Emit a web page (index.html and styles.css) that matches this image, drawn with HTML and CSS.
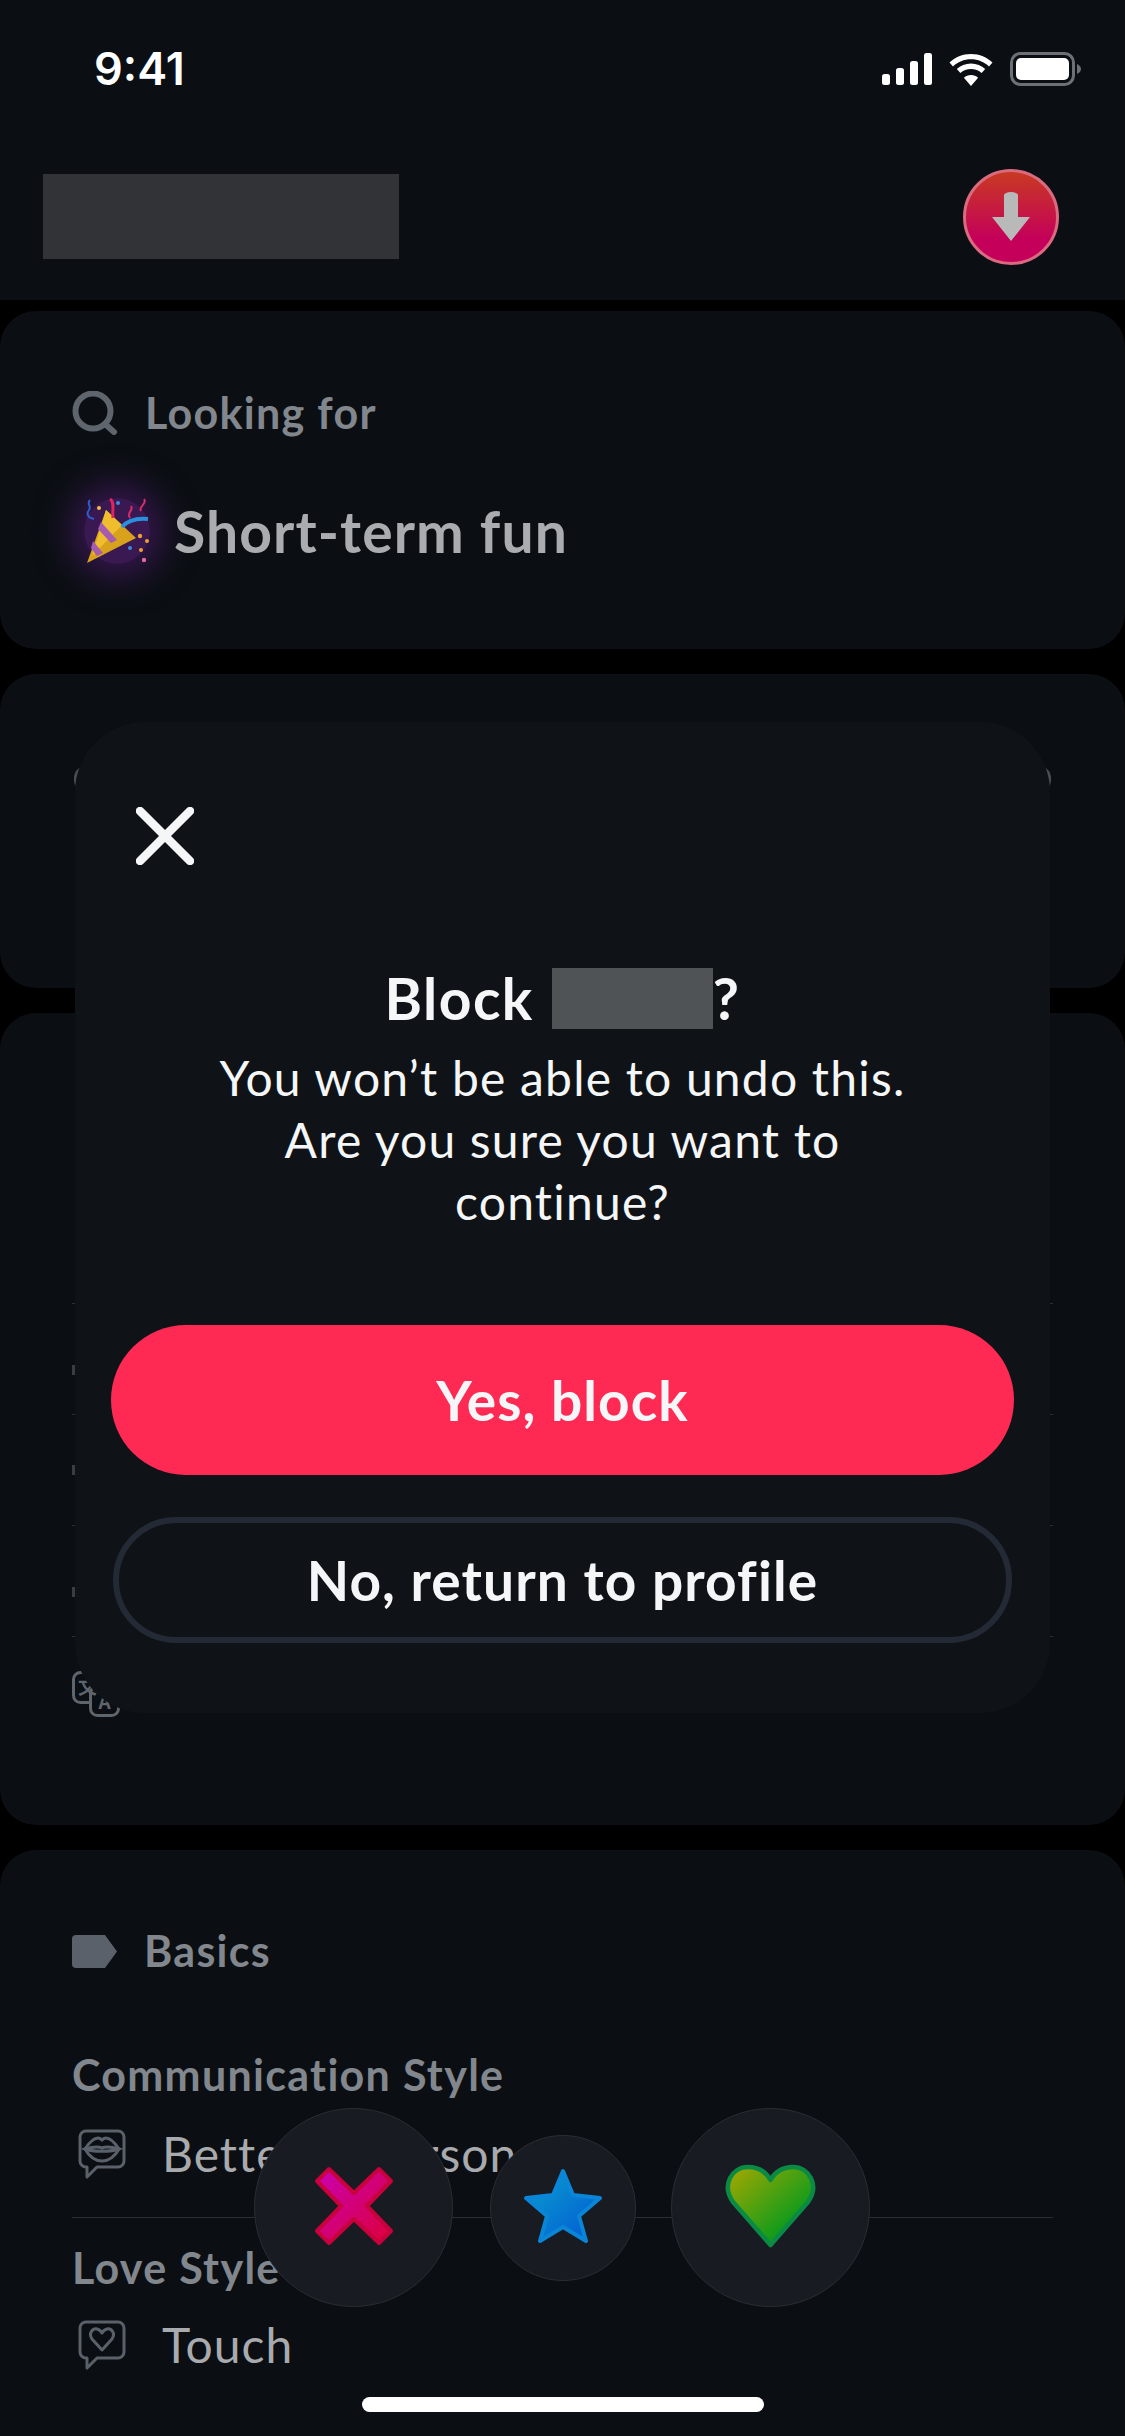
FILE: index.html
```html
<!DOCTYPE html>
<html lang="en">
<head>
<meta charset="UTF-8" />
<meta name="viewport" content="width=device-width, initial-scale=1" />
<title>Block profile</title>
<link rel="stylesheet" href="styles.css">
</head>
<body>
<div id="app">
  <header class="top-bar">
    <div class="status-bar">
      <span class="clock">9:41</span>
      <div class="status-icons">
        <svg class="signal" width="50" height="32" viewBox="0 0 50 32"><rect x="0" y="21" width="8" height="11" rx="2.5"/><rect x="14" y="15" width="8" height="17" rx="2.5"/><rect x="28" y="8" width="8" height="24" rx="2.5"/><rect x="42" y="0" width="8" height="32" rx="2.5"/></svg>
        <svg class="wifi" width="46" height="33" viewBox="0 0 46 33"><path d="M23 5C14.500 5 7 8.300 1.500 13.500L5 17.500C9.700 13 16 10.300 23 10.300S36.300 13 41 17.500L44.500 13.500C39 8.300 31.500 5 23 5Z" transform="translate(0 -4)"/><path d="M23 13.500C17.500 13.500 12.500 15.600 8.800 19L12.400 23C15.200 20.400 18.900 18.900 23 18.900S30.800 20.400 33.600 23L37.200 19C33.500 15.600 28.500 13.500 23 13.500Z" transform="translate(0 -3)"/><path d="M23 22C20.300 22 17.800 23 15.900 24.800L23 33L30.100 24.800C28.200 23 25.700 22 23 22Z"/></svg>
        <svg class="battery" width="71" height="34" viewBox="0 0 71 34"><rect x="1.500" y="1.500" width="62" height="31" rx="9" fill="none" stroke="#6d7074" stroke-width="3"/><rect x="6" y="6" width="53" height="22" rx="5" fill="#fff"/><path d="M67 12c2.500 1 4 3 4 5s-1.500 4-4 5z" fill="#6d7074"/></svg>
      </div>
    </div>
    <div class="nav-row">
      <div class="name-block"></div>
      <button class="rewind-btn">
        <svg width="40" height="50" viewBox="0 0 40 50"><path d="M13 3a7 3 0 0 1 14 0V25H39L20 49 1 25H13Z" fill="#b9b9b9"/></svg>
      </button>
    </div>
  </header>

  <main class="cards">
    <section class="card looking-card">
      <div class="section-head">
        <svg class="head-icon" width="46" height="44" viewBox="0 0 46 44"><circle cx="21" cy="20" r="17.500" fill="none" stroke="#5f656c" stroke-width="6"/><path d="M33 33L42 41" stroke="#5f656c" stroke-width="6" stroke-linecap="round"/></svg>
        <span>Looking for</span>
      </div>
      <div class="looking-value">
        <span class="emoji-glow">
          <svg width="66" height="66" viewBox="0 0 66 66">
            <path d="M22 12L52 40 3 65Z" fill="#d9a21c"/>
            <path d="M22 12L38 27 8 58Z" fill="#efbe2e"/>
            <path d="M17 24L33 42 27 45 14 31Z" fill="#a45bb0"/>
            <path d="M9 43L19 55 13 58 7 50Z" fill="#a45bb0"/>
            <path d="M38 29C44 22 52 20 64 21" fill="none" stroke="#2a8fdc" stroke-width="4"/>
            <path d="M26 1C31 4 28 12 29 20" fill="none" stroke="#e0245e" stroke-width="3"/>
            <path d="M46 20C42 14 50 13 47 8M60 1C64 6 54 8 57 13" fill="none" stroke="#d62d6a" stroke-width="2"/>
            <path d="M6 2C2 6 8 8 5 12S4 20 10 21" fill="none" stroke="#2d5fd0" stroke-width="2"/>
            <circle cx="15" cy="10" r="2" fill="#f0c040"/><circle cx="34" cy="5" r="2" fill="#3d8be0"/>
            <circle cx="56" cy="38" r="2.200" fill="#f0a030"/><circle cx="63" cy="43" r="2" fill="#f0a030"/>
            <circle cx="46" cy="50" r="2" fill="#3d8be0"/><circle cx="57" cy="52" r="2" fill="#f0a030"/>
            <circle cx="60" cy="62" r="2.200" fill="#e06a9a"/>
          </svg>
        </span>
        <span>Short-term fun</span>
      </div>
    </section>

    <section class="card bio-card">
      <div class="photo-edge"></div>
    </section>

    <section class="card details-card">
      <div class="detail-row top-row"></div>
      <div class="detail-row"><span class="row-edge low"></span></div>
      <div class="detail-row"><span class="row-edge"></span></div>
      <div class="detail-row"><span class="row-edge low"></span></div>
      <div class="language-row">
        <svg width="48" height="46" viewBox="0 0 48 46">
          <rect x="1.500" y="1.500" width="28" height="30" rx="7" fill="none" stroke="#5f656c" stroke-width="3"/>
          <rect x="18.500" y="15.500" width="28" height="29" rx="7" fill="#0b0f13" stroke="#5f656c" stroke-width="3"/>
          <text x="15.500" y="23" class="lang-glyph">文</text>
          <text x="32.500" y="38" class="lang-glyph">A</text>
        </svg>
        <span class="lang-dots"><i></i><i></i><i></i><i></i></span>
      </div>
    </section>

    <section class="card basics-card">
      <div class="section-head">
        <svg class="head-icon" width="45" height="33" viewBox="0 0 45 33"><path d="M4 0H33L45 16.500 33 33H4A4 4 0 0 1 0 29V4A4 4 0 0 1 4 0Z" fill="#5b616a"/></svg>
        <span>Basics</span>
      </div>
      <div class="basic-item first">
        <div class="basic-label">Communication Style</div>
        <div class="basic-value">
          <svg width="48" height="50" viewBox="0 0 48 50" fill="none" stroke="#5b616a" stroke-width="3">
            <path d="M8 2H40A6 6 0 0 1 46 8V32A6 6 0 0 1 40 38H19L9 48V38H8A6 6 0 0 1 2 32V8A6 6 0 0 1 8 2Z" stroke-linejoin="round"/>
            <path d="M7 20C11 14 16 9 20 9 22 9 23 10 24 11 25 10 26 9 28 9 32 9 37 14 41 20 37 27 31 32 24 32S11 27 7 20Z"/>
            <path d="M7 20C14 18 19 17 24 19 29 17 34 18 41 20 34 23 14 23 7 20Z"/>
          </svg>
          <span>Better in person</span>
        </div>
      </div>
      <div class="basic-item last">
        <div class="basic-label">Love Style</div>
        <div class="basic-value">
          <svg width="48" height="50" viewBox="0 0 48 50" fill="none" stroke="#5b616a" stroke-width="3">
            <path d="M8 2H40A6 6 0 0 1 46 8V32A6 6 0 0 1 40 38H19L9 48V38H8A6 6 0 0 1 2 32V8A6 6 0 0 1 8 2Z" stroke-linejoin="round"/>
            <path d="M24 30L14 19C10 13 15 8 19 9 21 9.500 23 11 24 13 25 11 27 9.500 29 9 33 8 38 13 34 19Z" stroke-linejoin="round"/>
          </svg>
          <span>Touch</span>
        </div>
      </div>
    </section>
  </main>

  <div class="action-buttons">
    <button class="action-btn big">
      <svg width="80" height="80" viewBox="0 0 80 80">
        <defs><linearGradient id="nope" x1="0" y1="0" x2="1" y2="1"><stop offset="0" stop-color="#c900b4"/><stop offset="1" stop-color="#dc0038"/></linearGradient></defs>
        <path d="M15 3L40 27 65 3 77 15 53 40 77 65 65 77 40 53 15 77 3 65 27 40 3 15Z" fill="url(#nope)" stroke="#c8003c" stroke-width="4" stroke-linejoin="round"/>
      </svg>
    </button>
    <button class="action-btn small">
      <svg width="80" height="76" viewBox="0 0 80 76">
        <defs><linearGradient id="superlike" x1="0" y1="0" x2="1" y2="1"><stop offset="0" stop-color="#0ca0cc"/><stop offset="1" stop-color="#0058d4"/></linearGradient></defs>
        <path d="M40 3L50 27 77 30 56 48 63 73 40 59 17 73 24 48 3 30 30 27Z" fill="url(#superlike)" stroke="#0a86d8" stroke-width="4" stroke-linejoin="round"/>
      </svg>
    </button>
    <button class="action-btn big">
      <svg width="93" height="84" viewBox="0 0 93 84">
        <defs><linearGradient id="like" x1="0" y1="0" x2="1" y2="1"><stop offset="0" stop-color="#a8a800"/><stop offset="0.8" stop-color="#009a1e"/></linearGradient></defs>
        <path d="M46.500 81L9 38C-3 21 8 3 24 3 34 3 42 8 46.500 16 51 8 59 3 69 3 85 3 96 21 84 38Z" fill="url(#like)" stroke="#0a8a44" stroke-width="4.500" stroke-linejoin="round"/>
      </svg>
    </button>
  </div>
  <div class="home-indicator"></div>

  <div class="block-modal">
    <button class="close-btn">
      <svg width="58" height="58" viewBox="0 0 58 58"><path d="M4 4L54 54M54 4L4 54" stroke="#f5f6f7" stroke-width="8.500" stroke-linecap="round"/></svg>
    </button>
    <h2 class="modal-title">Block <span class="name-mask"></span>?</h2>
    <p class="modal-text">You won’t be able to undo this.<br>Are you sure you want to<br>continue?</p>
    <button class="modal-btn primary">Yes, block</button>
    <button class="modal-btn secondary">No, return to profile</button>
  </div>
</div>
</body>
</html>
```

FILE: styles.css
```css
* {
  box-sizing: border-box;
}

body {
  margin: 0;
  background: #000;
  font-family: 'Lato', 'Open Sans', sans-serif;
  color: #f5f6f7;
}

button {
  font-family: inherit;
  padding: 0;
  border: none;
  background: none;
  display: flex;
  align-items: center;
  justify-content: center;
}

#app {
  position: relative;
  width: 1125px;
  height: 2436px;
  overflow: hidden;
}

/* Top bar */
.top-bar {
  height: 300px;
  background: #0b0f13;
  padding: 0 44px 0 43px;
}

.status-bar {
  height: 138px;
  padding: 52px 0 0 51px;
  display: flex;
  justify-content: space-between;
  align-items: flex-start;
}

.clock {
  font-family: 'Inter', sans-serif;
  font-size: 45px;
  line-height: 34px;
  font-weight: 600;
  color: #fff;
}

.status-icons {
  display: flex;
  gap: 16px;
  align-items: center;
}

.status-icons svg {
  display: block;
  fill: #fff;
}

.nav-row {
  display: flex;
  justify-content: space-between;
  align-items: center;
  padding-right: 22px;
  height: 96px;
  margin-top: 31px;
}

.name-block {
  width: 356px;
  height: 85px;
  margin-top: -2px;
  background: #323336;
}

.rewind-btn {
  width: 96px;
  height: 96px;
  border-radius: 50%;
  border: 3px solid #d96a80;
  background: linear-gradient(180deg, #c83a22 0%, #c4005a 75%);
}

/* Cards */
.cards {
  display: flex;
  flex-direction: column;
  gap: 25px;
  margin-top: 11px;
}

.card {
  background: #0b0f13;
  border-radius: 36px;
  padding: 0 72px;
}

.section-head {
  display: flex;
  align-items: center;
  gap: 27px;
  font-size: 43px;
  line-height: 50px;
  letter-spacing: 1.3px;
  font-weight: 700;
  color: #82878e;
}

.head-icon {
  display: block;
  flex: none;
}

.looking-card {
  height: 338px;
  padding-top: 77px;
}

.looking-value {
  display: flex;
  align-items: center;
  gap: 24px;
  margin-top: 60px;
  padding-left: 12px;
  font-size: 57px;
  line-height: 66px;
  letter-spacing: 1.1px;
  font-weight: 700;
  color: #aaacaf;
}

.emoji-glow {
  display: block;
  width: 66px;
  height: 66px;
  border-radius: 50%;
  background: rgba(90, 30, 125, 0.6);
  box-shadow: 0 0 34px 14px rgba(90, 30, 125, 0.55);
}

.emoji-glow svg {
  display: block;
}

.bio-card {
  height: 314px;
  padding: 92px 2px 0;
}

.photo-edge {
  margin: 0 72px;
  height: 26px;
  border-radius: 12px;
  background: #4b4f55;
}

.details-card {
  height: 812px;
  padding-top: 179px;
}

.detail-row {
  height: 112px;
  border-top: 1px solid #2b2e33;
  border-bottom: 1px solid #2b2e33;
  margin-bottom: -1px;
  display: flex;
  align-items: center;
}

.detail-row.top-row {
  border-top-color: transparent;
}

.row-edge {
  width: 3px;
  height: 10px;
  background: #3a3e44;
}

.row-edge.low {
  margin-top: 22px;
}

.language-row {
  display: flex;
  gap: 65px;
  padding-top: 35px;
}

.language-row svg {
  display: block;
  flex: none;
}

.lang-glyph {
  fill: #5f656c;
  font-family: 'Noto Sans CJK SC', 'Liberation Sans', sans-serif;
  font-size: 19px;
  font-weight: 700;
  text-anchor: middle;
}

.lang-dots {
  display: flex;
  gap: 24px;
  padding-top: 34px;
}

.lang-dots i {
  width: 8px;
  height: 5px;
  background: #777a7e;
  border-radius: 50%;
}

.basics-card {
  height: 620px;
  padding-top: 76px;
}

.basic-item {
  padding-top: 25px;
}

.basic-item.first {
  padding-top: 74px;
  height: 242px;
  border-bottom: 1px solid #2b2e33;
}

.basic-label {
  font-size: 43px;
  line-height: 50px;
  letter-spacing: 1.3px;
  font-weight: 700;
  color: #82878e;
}

.basic-value {
  display: flex;
  align-items: center;
  gap: 36px;
  margin-top: 26px;
  padding-left: 6px;
  font-size: 48px;
  line-height: 56px;
  letter-spacing: 1px;
  color: #a8aaad;
}

.basic-item.last .basic-value {
  margin-top: 24px;
}

.basic-value svg {
  display: block;
  flex: none;
}

/* Floating actions */
.action-buttons {
  position: absolute;
  left: 254px;
  top: 2108px;
  width: 616px;
  height: 199px;
  display: flex;
  align-items: center;
  justify-content: space-between;
}

.action-btn {
  border-radius: 50%;
  background: #181c22;
  border: 1px solid #2a2e33;
}

.action-btn svg {
  display: block;
  margin-bottom: 3px;
}

.action-btn.big {
  width: 199px;
  height: 199px;
}

.action-btn.small {
  width: 146px;
  height: 146px;
  margin-left: 1px;
}

.home-indicator {
  position: absolute;
  left: 362px;
  top: 2397px;
  width: 402px;
  height: 15px;
  border-radius: 8px;
  background: #fff;
}

/* Modal */
.block-modal {
  position: absolute;
  left: 75px;
  top: 722px;
  width: 975px;
  height: 991px;
  padding: 85px 36px 0;
  border-radius: 70px;
  background: #0f1317;
  display: flex;
  flex-direction: column;
  align-items: center;
}

.close-btn {
  align-self: flex-start;
  margin-left: 25px;
}

.close-btn svg {
  display: block;
}

.modal-title {
  margin: 102px 0 0;
  display: flex;
  align-items: center;
  gap: 18px;
  font-size: 57px;
  line-height: 62px;
  letter-spacing: 1.5px;
  font-weight: 700;
}

.name-mask {
  width: 161px;
  height: 61px;
  margin-right: -18px;
  background: #4f5356;
}

.modal-text {
  margin: 18px 0 0;
  text-align: center;
  font-size: 48px;
  line-height: 62px;
  letter-spacing: 1.2px;
  font-weight: 400;
}

.modal-btn {
  width: 903px;
  border-radius: 75px;
  font-size: 55px;
  letter-spacing: 1.1px;
  font-weight: 700;
  color: #f5f6f7;
}

.modal-btn.primary {
  height: 150px;
  margin-top: 92px;
  background: #ff2a54;
}

.modal-btn.secondary {
  height: 126px;
  margin-top: 42px;
  width: 899px;
  border: 6px solid #232a35;
}
```
